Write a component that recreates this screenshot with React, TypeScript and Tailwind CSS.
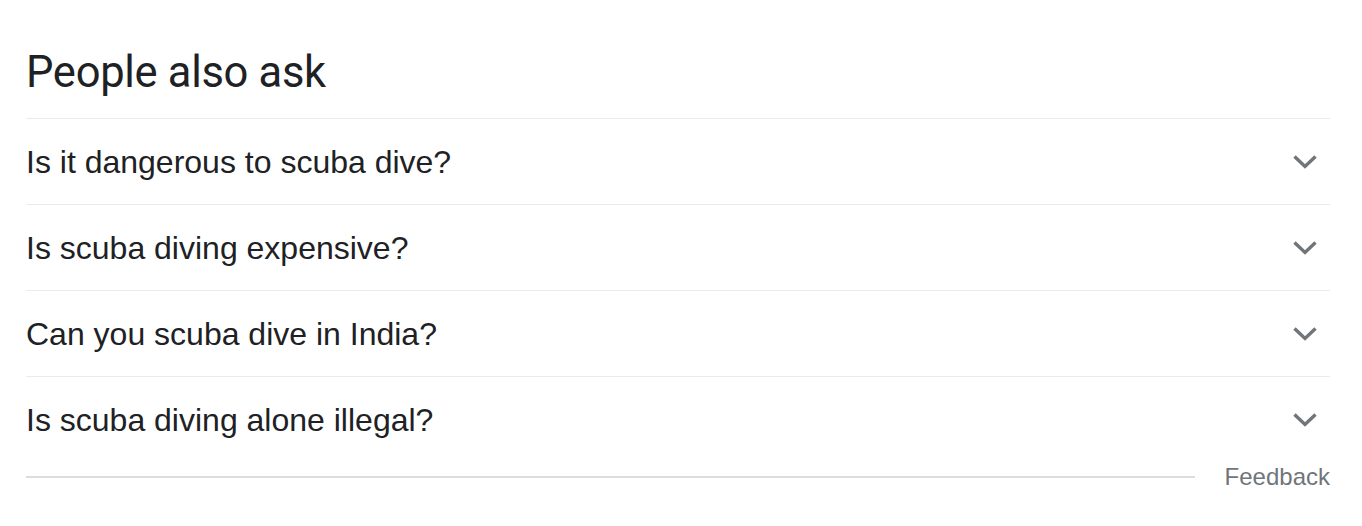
const questions = [
  "Is it dangerous to scuba dive?",
  "Is scuba diving expensive?",
  "Can you scuba dive in India?",
  "Is scuba diving alone illegal?",
];

function Chevron() {
  return (
    <svg width="26" height="18" viewBox="0 0 26 18" className="text-[#70757a]">
      <polyline
        points="2.5,3.5 13,13.5 23.5,3.5"
        fill="none"
        stroke="currentColor"
        strokeWidth="3.4"
      />
    </svg>
  );
}

export default function App() {
  return (
    <div className="w-[1362px] h-[526px] bg-white pl-[26px] pr-[32px] pt-[45px]">
      {/* Heading */}
      <h2 className="text-[43.5px] leading-[56px] text-[#202124] font-['Roboto',sans-serif] tracking-[-0.3px] pb-[17px]">
        People also ask
      </h2>

      {/* Questions */}
      <div className="border-t border-[#ebebeb]">
        {questions.map((q, i) => (
          <div
            key={q}
            className={
              i < questions.length - 1
                ? "h-[86px] flex items-center justify-between border-b border-[#ebebeb]"
                : "h-[86px] flex items-center justify-between"
            }
          >
            <span className="text-[32px] text-[#202124] font-['Liberation_Sans',Arial,sans-serif]">
              {q}
            </span>
            <span className="mr-[12px] flex items-center">
              <Chevron />
            </span>
          </div>
        ))}
      </div>

      {/* Footer */}
      <div className="flex items-center gap-[30px] -mt-[1px]">
        <div className="flex-1 h-[2px] bg-[#dadce0]" />
        <span className="text-[24px] leading-[30px] text-[#70757a] font-['Liberation_Sans',Arial,sans-serif]">
          Feedback
        </span>
      </div>
    </div>
  );
}
